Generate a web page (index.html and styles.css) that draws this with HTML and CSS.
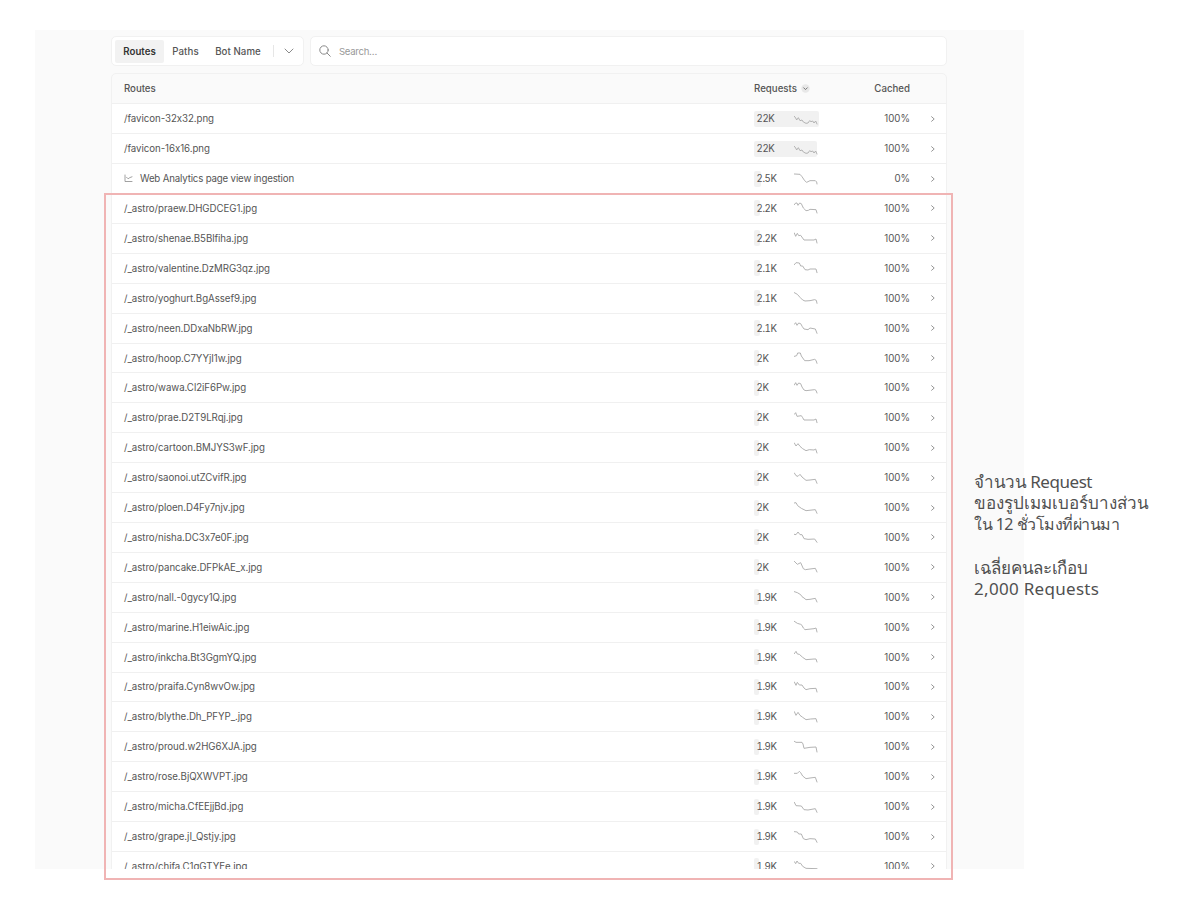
FILE: index.html
```
<!DOCTYPE html>
<html lang="th">
  <head>
    <meta charset="UTF-8" />
    <meta name="viewport" content="width=device-width, initial-scale=1.0" />
    <title>Requests by route</title>
    <link rel="stylesheet" href="styles.css">
  </head>

  <body>
    <div class="slide">
      <div class="panel">
        <div class="toolbar">
          <div class="tabs">
            <button class="tab active">Routes</button>
            <button class="tab">Paths</button>
            <button class="tab bot">Bot Name</button>
            <button class="more">
              <svg width="10" height="6" viewBox="0 0 10 6"><path d="M1 1l4 4 4-4" /></svg>
            </button>
          </div>
          <div class="search">
            <svg width="12" height="12" viewBox="0 0 12 12"><circle cx="5" cy="5" r="4.2" /><path d="M8 8l3.3 3.3" /></svg>
            <span>Search…</span>
          </div>
        </div>
        <div class="table">
          <div class="row head">
            <span class="name">Routes</span>
            <span class="requests">Requests
              <svg width="9" height="9" viewBox="0 0 9 9"><circle cx="4.5" cy="4.5" r="4.2" /><path d="M2.7 3.8l1.8 1.8 1.8-1.8" /></svg>
            </span>
            <span class="cached">Cached</span>
          </div>
          <div id="rows"></div>
        </div>
      </div>
      <div class="highlight"></div>
      <div class="note">
        <p class="n1">จำนวน Request</p>
        <p class="n2">ของรูปเมมเบอร์บางส่วน</p>
        <p class="n3">ใน 12 ชั่วโมงที่ผ่านมา</p>
        <p class="gap n4">เฉลี่ยคนละเกือบ</p>
        <p class="n5">2,000 Requests</p>
      </div>
    </div>
    <script>
      // name, requests, bar width, cached, trend line
      var routes = [
        ["/favicon-32x32.png", "22K", 65, "100%", "1,13 5,18 8,24 13,17 18,26 24,24 28,30 36,34 42,33 47,26 51,29 56,27 60,33 65,27 69,36"],
        ["/favicon-16x16.png", "22K", 63, "100%", "1,13 5,18 8,24 13,17 18,26 24,24 28,30 36,34 42,33 47,26 51,29 56,27 60,33 65,27 69,36"],
        ["Web Analytics page view ingestion", "2.5K", 7, "0%", "1,6 18,7 24,14 32,26 38,31 48,26 64,26 68,30 69,36"],
        ["/_astro/praew.DHGDCEG1.jpg", "2.2K", 6, "100%", "1,11 5,6 9,6 12,13 17,6 22,8 28,21 36,29 43,28 48,25 66,26 69,36"],
        ["/_astro/shenae.B5Blfiha.jpg", "2.2K", 6, "100%", "1,6 5,16 10,7 14,14 20,13 30,27 60,27 66,24 69,36"],
        ["/_astro/valentine.DzMRG3qz.jpg", "2.1K", 6, "100%", "1,11 6,5 16,6 20,15 26,15 33,26 42,27 48,24 66,24 69,35"],
        ["/_astro/yoghurt.BgAssef9.jpg", "2.1K", 6, "100%", "1,5 10,10 18,19 26,27 33,30 48,29 62,26 67,28 69,37"],
        ["/_astro/neen.DDxaNbRW.jpg", "2.1K", 6, "100%", "1,10 5,5 9,13 14,6 20,8 25,17 30,24 42,26 48,21 64,24 69,37"],
        ["/_astro/hoop.C7YYjI1w.jpg", "2K", 5, "100%", "1,16 8,14 11,6 19,6 22,15 32,29 45,29 62,25 66,28 69,37"],
        ["/_astro/wawa.Cl2iF6Pw.jpg", "2K", 5, "100%", "1,12 5,5 9,13 14,6 20,8 24,18 30,27 36,29 62,26 66,28 69,36"],
        ["/_astro/prae.D2T9LRqj.jpg", "2K", 5, "100%", "1,10 5,5 9,16 22,14 26,20 30,27 60,27 66,24 69,35"],
        ["/_astro/cartoon.BMJYS3wF.jpg", "2K", 5, "100%", "1,6 6,15 12,8 18,16 26,23 36,29 46,26 60,27 65,24 69,36"],
        ["/_astro/saonoi.utZCvifR.jpg", "2K", 5, "100%", "1,6 6,14 12,16 18,10 24,18 36,28 48,27 64,25 69,37"],
        ["/_astro/ploen.D4Fy7njv.jpg", "2K", 5, "100%", "1,6 6,5 11,14 22,22 36,29 64,26 69,37"],
        ["/_astro/nisha.DC3x7e0F.jpg", "2K", 5, "100%", "1,13 6,14 12,6 18,14 24,14 30,26 42,28 62,27 69,37"],
        ["/_astro/pancake.DFPkAE_x.jpg", "2K", 5, "100%", "1,4 10,13 20,8 28,26 34,29 48,27 64,25 69,36"],
        ["/_astro/nall.-0gycy1Q.jpg", "1.9K", 5, "100%", "1,5 10,8 20,14 24,20 30,24 36,29 48,28 64,25 69,36"],
        ["/_astro/marine.H1eiwAic.jpg", "1.9K", 5, "100%", "1,4 10,10 20,13 24,16 28,24 33,29 42,28 60,26 66,24 69,36"],
        ["/_astro/inkcha.Bt3GgmYQ.jpg", "1.9K", 5, "100%", "1,11 6,4 10,12 16,13 26,22 36,29 60,27 66,27 69,36"],
        ["/_astro/praifa.Cyn8wvOw.jpg", "1.9K", 5, "100%", "1,6 6,16 10,7 16,15 24,15 30,24 36,29 48,26 66,25 69,36"],
        ["/_astro/blythe.Dh_PFYP_.jpg", "1.9K", 5, "100%", "1,5 6,16 12,7 18,16 26,22 36,29 50,27 66,26 69,36"],
        ["/_astro/proud.w2HG6XJA.jpg", "1.9K", 5, "100%", "1,4 6,7 24,7 27,12 30,25 48,22 66,21 69,36"],
        ["/_astro/rose.BjQXWVPT.jpg", "1.9K", 5, "100%", "1,10 10,10 16,4 20,8 26,18 36,26 48,24 64,22 69,36"],
        ["/_astro/micha.CfEEjjBd.jpg", "1.9K", 5, "100%", "1,7 6,17 22,18 30,29 42,30 64,26 69,37"],
        ["/_astro/grape.jI_Qstjy.jpg", "1.9K", 5, "100%", "1,5 10,6 14,12 22,12 28,26 36,29 48,26 64,27 69,37"],
        ["/_astro/chifa.C1gGTYEe.jpg", "1.9K", 5, "100%", "1,8 5,14 9,6 14,13 20,13 26,22 36,28 69,29"]
      ];

      var chartIcon =
        '<svg class="chart" width="9" height="9" viewBox="0 0 9 9"><path d="M1 1v6.5h7M2.5 3.2l1.6 1.6 1.7-1.2L8 2.8" /></svg>';

      document.getElementById("rows").innerHTML = routes
        .map(function (r) {
          var isPath = r[0][0] === "/";
          return (
            '<div class="row"><span class="name' +
            (isPath ? '">' : ' titled">' + chartIcon) +
            r[0] +
            '</span><span class="requests"><span class="bar" style="width:' +
            r[2] +
            'px"></span><span class="count">' +
            r[1] +
            '</span><svg class="trend" width="24" height="14" viewBox="0 0 72 42"><polyline points="' +
            r[4] +
            '" /></svg></span><span class="cached">' +
            r[3] +
            '</span><svg class="go" width="4" height="6" viewBox="0 0 4 6"><path d="M0.6 0.7L3.2 3 0.6 5.3" /></svg></div>'
          );
        })
        .join("");
    </script>
  </body>
</html>
```
FILE: styles.css
```
* {
  box-sizing: border-box;
}

body {
  margin: 0;
  background-color: #fff;
  font-family: Inter, sans-serif;
  color: #555;
}

.slide {
  position: relative;
  width: 1200px;
  height: 900px;
  padding: 30px 0 0 35px;
  overflow: hidden;
}

.panel {
  width: 989px;
  height: 839px;
  padding: 6px 77px 0 76px;
  background-color: #fafafa;
  overflow: hidden;
}

svg {
  fill: none;
  stroke: #8a8a8a;
  stroke-linecap: round;
  stroke-linejoin: round;
}

.toolbar {
  display: flex;
  gap: 6px;
  height: 30px;
  margin-bottom: 7px;
}

.tabs,
.search {
  display: flex;
  align-items: center;
  border: 1px solid #f1f1f1;
  border-radius: 5px;
  background-color: #fff;
}

.tabs {
  width: 193px;
  padding-left: 3px;
}

.tab {
  width: 49px;
  height: 23px;
  padding: 0;
  border: none;
  border-radius: 2px;
  background: none;
  font-family: inherit;
  font-size: 9.7px;
  font-weight: 500;
  letter-spacing: 0.06px;
  color: #555;
}

.tab.active {
  background-color: #f2f2f2;
  font-weight: 600;
  letter-spacing: 0;
  color: #333;
}

.tab:nth-child(2) {
  width: 43px;
}

.tab.bot {
  width: 62px;
}

.more {
  display: flex;
  align-items: center;
  height: 12px;
  margin-left: 4px;
  padding: 0 0 0 10px;
  border: none;
  border-left: 1px solid #e6e6e6;
  background: none;
}

.search {
  flex: 1;
  padding-left: 8px;
  gap: 8px;
  font-size: 9.6px;
  letter-spacing: -0.3px;
  color: #999;
}

.table {
  border: 1px solid #f1f1f1;
  border-radius: 5px 5px 0 0;
}

.row {
  display: flex;
  align-items: center;
  height: 29.92px;
  padding-left: 12px;
  border-bottom: 1px solid #f0f0f0;
  background-color: #fff;
  font-size: 9.7px;
}

.head {
  height: 30.3px;
  background: none;
  font-weight: 500;
}

.name {
  display: flex;
  align-items: center;
  width: 630px;
  letter-spacing: -0.05px;
}

.name.titled {
  letter-spacing: -0.17px;
}

.chart {
  margin: 0 7px 0 0;
  stroke-width: 0.8;
}

.requests {
  position: relative;
  display: flex;
  align-items: center;
  width: 66px;
  height: 16px;
}

.head .requests svg {
  margin-left: 4px;
  stroke: #777;
}

.head circle {
  fill: #e8e8e8;
  stroke: none;
}

.bar {
  position: absolute;
  left: 0;
  top: 0;
  height: 16px;
  border-radius: 2px;
  background-color: #f1f1f1;
}

.count {
  position: relative;
  width: 38px;
  padding-left: 2.5px;
  letter-spacing: -0.4px;
  font-variant-numeric: tabular-nums;
}

.trend {
  position: relative;
  margin-left: 2px;
  stroke: #adadad;
  stroke-width: 2.8;
}

.cached {
  width: 90px;
  text-align: right;
}

.go {
  margin-left: 21px;
  stroke-width: 0.9;
}

/* red frame around the member pictures */
.highlight {
  position: absolute;
  left: 104px;
  top: 193px;
  width: 849px;
  height: 687px;
  border: 2px solid #f0b4b4;
}

.note {
  position: absolute;
  left: 974px;
  top: 470.5px;
  font-family: "Noto Sans", sans-serif;
  font-size: 17px;
  line-height: 21.6px;
  color: #505050;
  white-space: nowrap;
}

.note p {
  margin: 0;
  height: 21.6px;
}

.note .gap {
  margin-top: 21.6px;
}

.n1 {
  letter-spacing: -0.45px;
}

.n3 {
  font-size: 16px;
  letter-spacing: -0.5px;
}

.n4 {
  letter-spacing: -0.3px;
}

.n5 {
  letter-spacing: 0.3px;
}
```
